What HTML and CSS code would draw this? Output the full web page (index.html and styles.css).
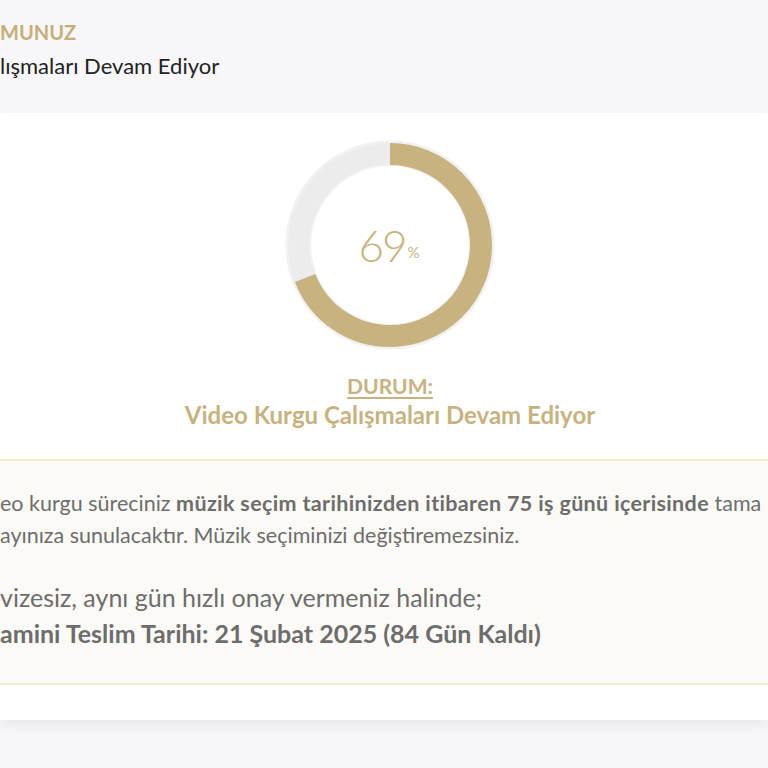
FILE: index.html
```html
<!DOCTYPE html>
<html lang="tr">
<head>
<meta charset="utf-8">
<title>Proje Durumu</title>
<link rel="stylesheet" href="styles.css">
</head>
<body>
<header class="page-head">
  <h1 class="page-title">MUNUZ</h1>
  <p class="page-sub">lışmaları Devam Ediyor</p>
</header>
<main class="card">
  <section class="status">
    <div class="donut">
      <svg class="donut-svg" width="212" height="212" viewBox="0 0 212 212">
        <circle cx="106" cy="106" r="103" fill="none" stroke="#f1f1f2" stroke-width="3"/>
        <circle cx="106" cy="106" r="91" fill="none" stroke="#ececec" stroke-width="22"/>
        <circle cx="106" cy="106" r="79.5" fill="none" stroke="#f3f3f3" stroke-width="1.5"/>
        <circle cx="106" cy="106" r="91" fill="none" stroke="#c8b27f" stroke-width="22"
          stroke-dasharray="394.5 571.8" transform="rotate(-90 106 106)"/>
      </svg>
      <div class="donut-label"><span class="pct-num">69</span><span class="pct-sign">%</span></div>
    </div>
    <div class="status-title">DURUM:</div>
    <div class="status-text">Video Kurgu Çalışmaları Devam Ediyor</div>
  </section>
  <section class="info">
    <p class="info-line">eo kurgu süreciniz <strong>müzik seçim tarihinizden itibaren 75 iş günü içerisinde</strong> tama</p>
    <p class="info-line">ayınıza sunulacaktır. Müzik seçiminizi değiştiremezsiniz.</p>
    <p class="info-big">vizesiz, aynı gün hızlı onay vermeniz halinde;</p>
    <p class="info-big info-strong">amini Teslim Tarihi: 21 Şubat 2025 (84 Gün Kaldı)</p>
  </section>
</main>
</body>
</html>
```
FILE: styles.css
```css
html, body {
  margin: 0;
  padding: 0;
}
body {
  background: #f7f7f9;
  font-family: "Lato", "Noto Sans", sans-serif;
  overflow: hidden;
  width: 768px;
  height: 768px;
}
.page-head {
  padding: 18px 0 0 0;
  box-sizing: border-box;
  height: 113px;
}
.page-title {
  margin: 0;
  font-size: 20px;
  line-height: 28px;
  font-weight: 700;
  color: #c6ae78;
  white-space: nowrap;
}
.page-sub {
  margin: 6px 0 0 0;
  font-size: 22px;
  line-height: 28px;
  color: #222222;
  white-space: nowrap;
}
.card {
  background: #ffffff;
  height: 607px;
  box-shadow: 0 6px 12px rgba(0, 0, 0, 0.06);
  padding-top: 26px;
  box-sizing: border-box;
}
.status {
  display: flex;
  flex-direction: column;
  align-items: center;
  padding-left: 12px;
}
.donut {
  position: relative;
  width: 212px;
  height: 212px;
}
.donut-svg {
  display: block;
}
.donut-label {
  position: absolute;
  inset: 0;
  display: flex;
  align-items: center;
  justify-content: center;
  color: #c8b27f;
  padding-right: 2px;
}
.pct-num {
  font-size: 44px;
  font-weight: 300;
  letter-spacing: -2px;
}
.pct-sign {
  font-size: 15px;
  align-self: center;
  margin-top: 14px;
  margin-left: 2px;
}
.status-title {
  margin-top: 22px;
  font-size: 21px;
  line-height: 26px;
  font-weight: 700;
  color: #c8b27f;
  text-decoration: underline;
  text-underline-offset: 3px;
}
.status-text {
  margin-top: 2px;
  font-size: 24px;
  line-height: 28px;
  font-weight: 700;
  color: #c8b27f;
}
.info {
  margin-top: 30px;
  background: #fcfaf6;
  border-top: 2px solid #f4eec8;
  border-bottom: 2px solid #f4eec8;
  padding: 26px 0 32px 0;
  color: #6d6d6d;
  white-space: nowrap;
  overflow: hidden;
}
.info-line {
  margin: 0;
  font-size: 21.5px;
  line-height: 32px;
}
.info-line strong {
  font-weight: 700;
  letter-spacing: 0.35px;
}
.info-big {
  margin: 0;
  font-size: 25px;
  line-height: 36px;
}
.info-line + .info-big {
  margin-top: 28px;
}
.info-strong {
  font-weight: 700;
}
```
